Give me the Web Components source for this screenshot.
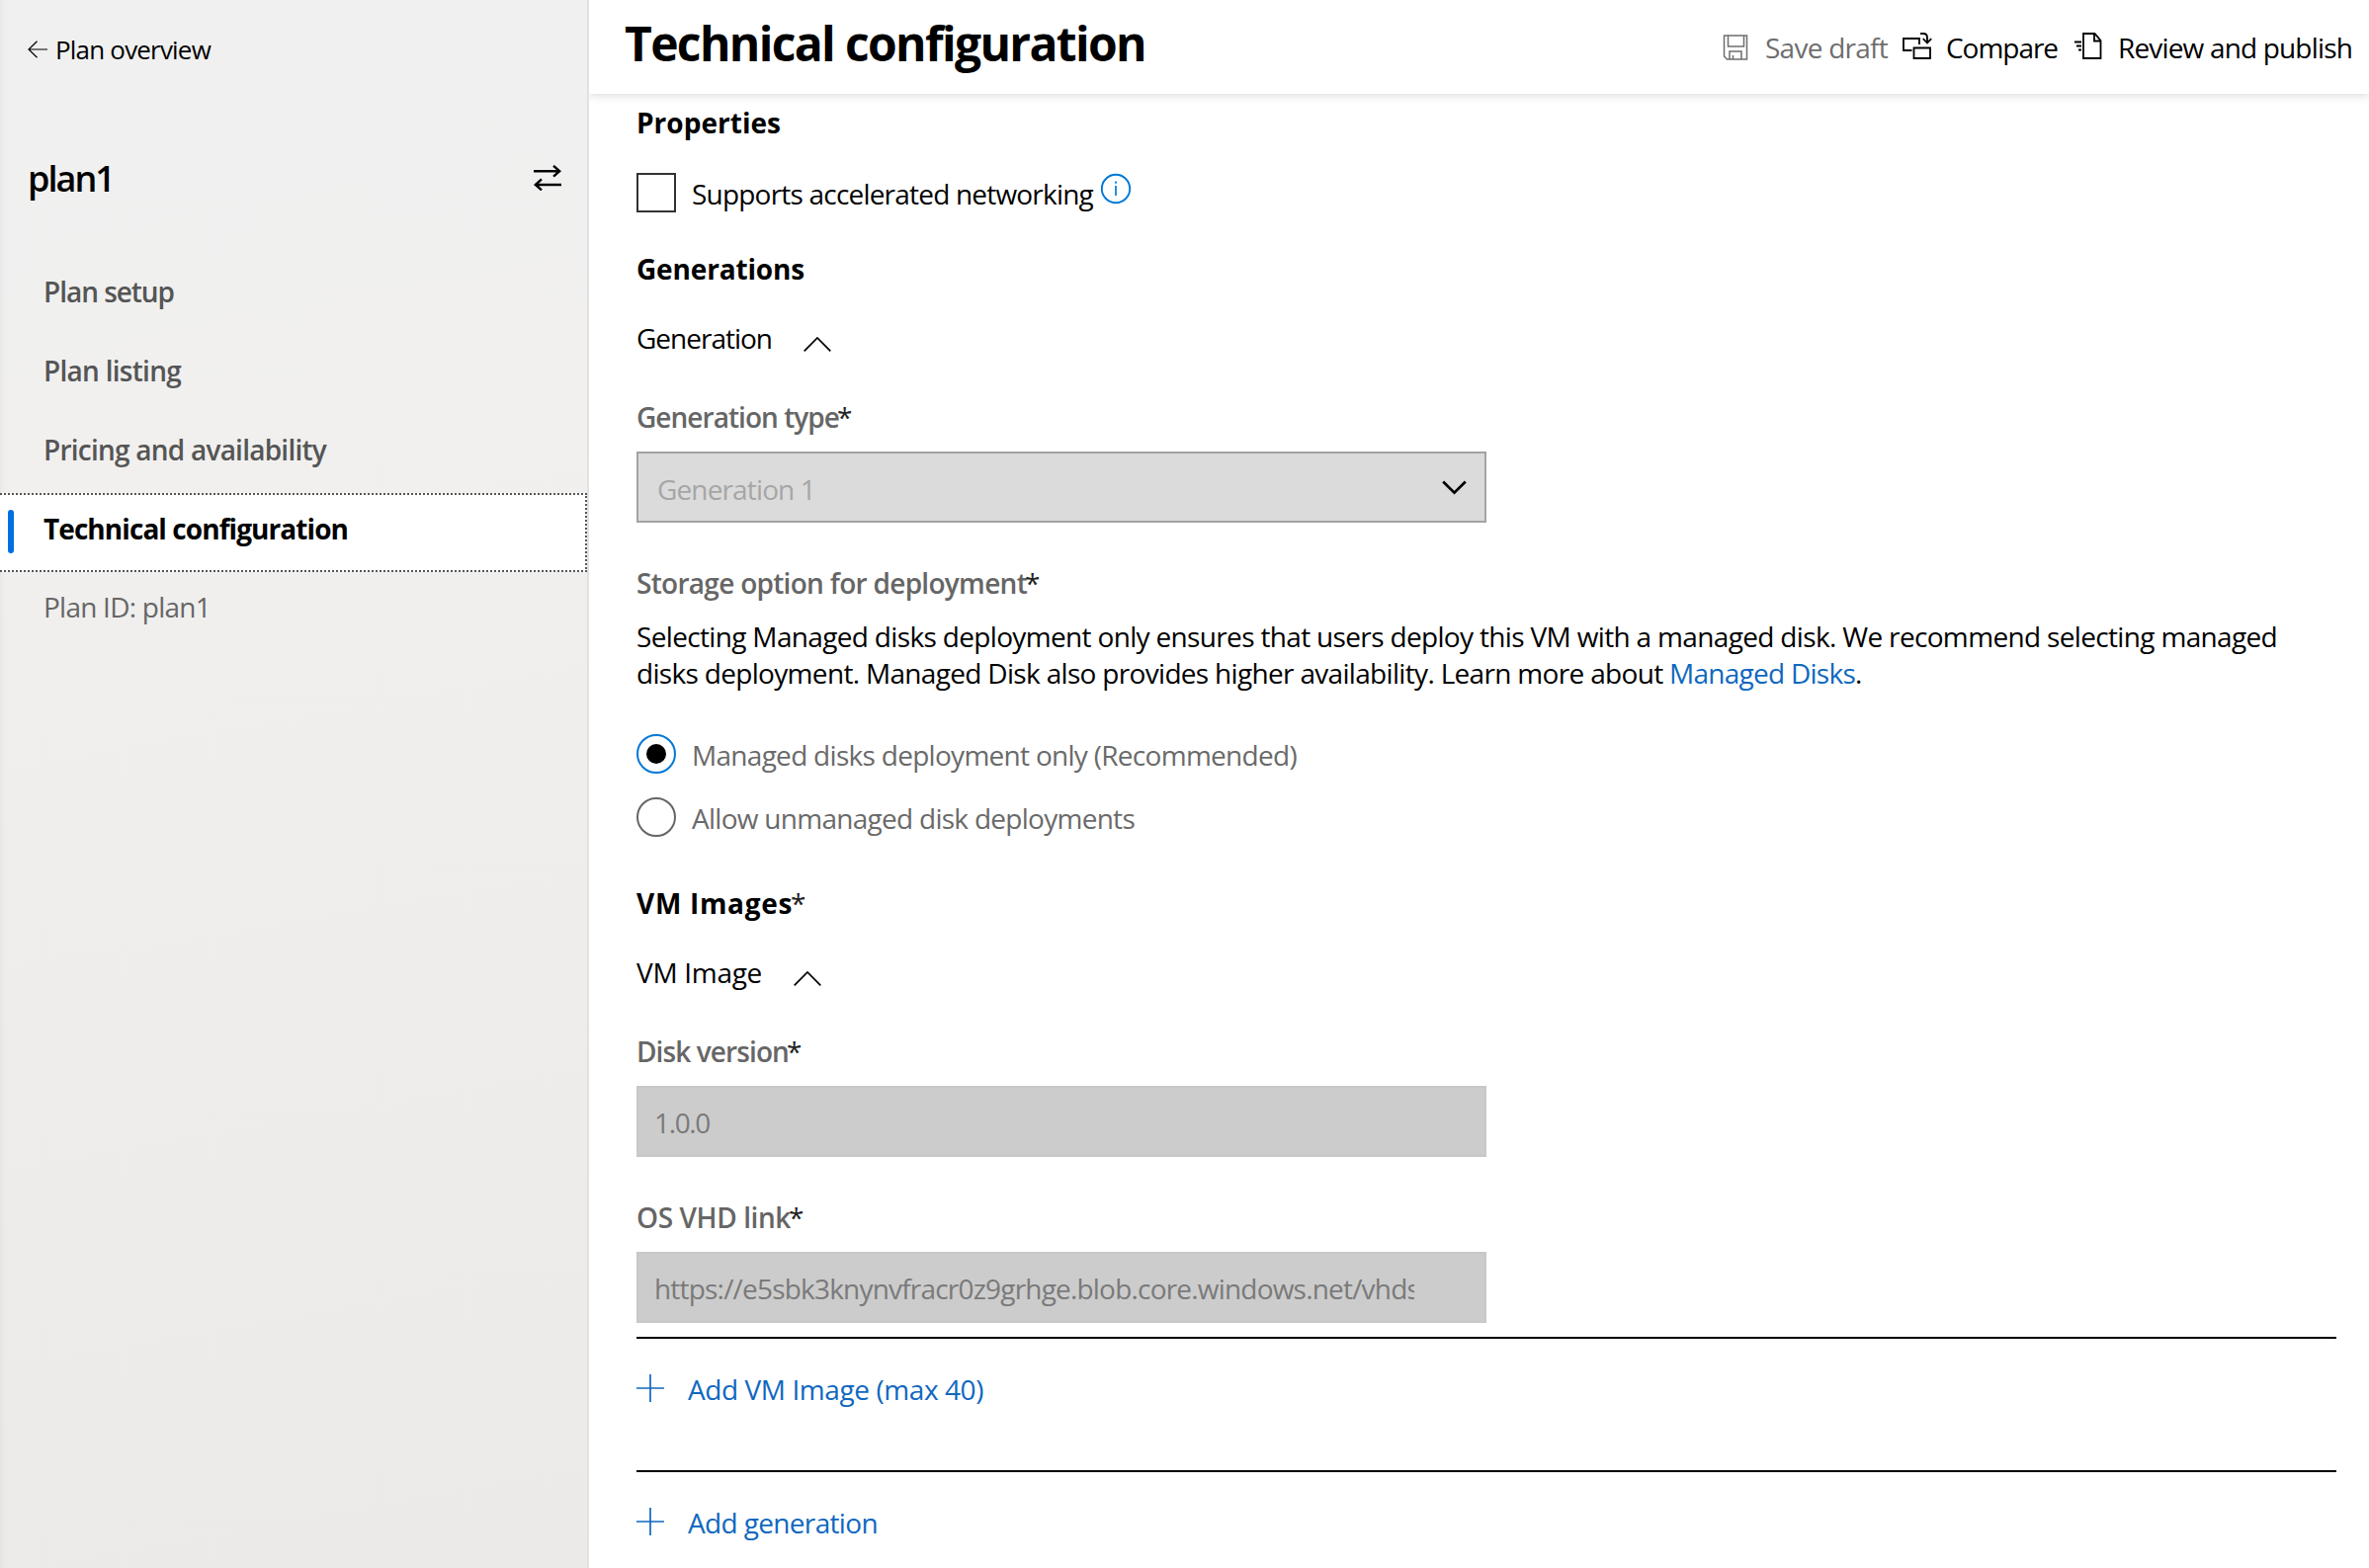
<!DOCTYPE html>
<html lang="en">
<head>
<meta charset="utf-8">
<title>Technical configuration</title>
<style>
html,body{margin:0;height:100%;background:#fff}
body{font-family:"Open Sans","Noto Sans",sans-serif;font-size:28px;line-height:40px;color:#000;overflow:hidden}
</style>
</head>
<body>
<plan-app></plan-app>
<script>
const define = (name, css, html) => customElements.define(name, class extends HTMLElement {
  constructor() {
    super();
    this.attachShadow({mode: "open"}).innerHTML = "<style>" + css + "</style>" + html(this);
  }
});
const attr = (el, n, d = "") => el.getAttribute(n) ?? d;

/* A run of text tracked to occupy the width given in "w". */
customElements.define("fit-text", class extends HTMLElement {
  constructor() {
    super();
    this.attachShadow({mode: "open"}).innerHTML = "<style>:host{display:inline-block;white-space:nowrap}</style><span><slot></slot></span>";
  }
  connectedCallback() {
    const w = +attr(this, "w"), n = this.textContent.length;
    const now = this.shadowRoot.querySelector("span").getBoundingClientRect().width;
    if (w && now && n) this.style.letterSpacing = ((w - now) / n).toFixed(3) + "px";
  }
});

const ICONS = {
  back: [20, 18, '<path d="M9.500 .7L1 9l8.500 8.300M1 9h19" stroke-width="1.200"/>'],
  swap: [28, 26, '<path d="M0 6.200h26M20 .8l6.200 5.400L20 11.600M28 20H2M8 14.400L1.800 20 8 25.400" stroke-width="2.400"/>'],
  save: [26, 26, '<path d="M1.500 1h23v24H4.500l-3-3zM5.500 1v11h16V1M7 25v-8h12v8M10.500 25v-4" stroke-width="1.500"/>'],
  compare: [30, 28, '<path d="M9.500 18H1V6h16v6M11.500 15.500H28V26H11.500zM18 1h3q4 0 4 4v5M20.800 6.200L25 10.400l4.200-4.200" stroke-width="1.800"/>'],
  publish: [30, 28, '<path d="M10 1h11.500l6 7v18H10zM21 1v7.500h6.500M1 9.500h7M3 13.500h5M5 17.500h3" stroke-width="1.800"/>'],
  up: [28, 15, '<path d="M.7 14.300L14 1l13.300 13.300" stroke-width="1.700"/>'],
  down: [25, 15, '<path d="M1.200 1.500l11.300 11.200L23.800 1.500" stroke-width="2.700"/>'],
  plus: [28, 28, '<path d="M14 0v28M0 14h28" stroke-width="1.700"/>'],
  info: [32, 32, '<circle cx="16" cy="16" r="14.200" stroke-width="1.900"/><path d="M16 13v10M16 8.500v2.300" stroke-width="1.700"/>']
};
define("ui-icon", ":host{display:block;flex:none}svg{display:block;fill:none;stroke:currentColor}", el => {
  const [w, h, p] = ICONS[attr(el, "name")];
  return `<svg width="${w}" height="${h}" viewBox="0 0 ${w} ${h}">${p}</svg>`;
});

define("nav-item", `
:host{display:flex;align-items:center;height:80px;box-sizing:border-box;padding:0 0 2px 44px;font-weight:600;color:#555}
:host([plain]){font-weight:400;color:#666;margin-top:-4px}
:host([selected]){margin-top:3px;padding:0 0 3px 8px;gap:30px;background:#fff;color:#000;font-weight:700;border:2px dotted #555;border-left:0}
:host([selected]) ::slotted(fit-text){padding-bottom:6px}
i{display:none}:host([selected]) i{display:block;width:6px;height:44px;border-radius:3px;background:#006fe0}`,
() => "<i></i><slot></slot>");

define("plan-sidebar", `
:host{display:block;width:594px;flex:none;border-right:2px solid #e1e1e1;background:linear-gradient(90deg,rgba(0,0,0,.03),transparent 6px),linear-gradient(170deg,#f0f0f0 0,#f1f0ef 28%,#ebeae9 100%)}
.back{display:flex;align-items:center;gap:8px;height:40px;padding:30px 0 0 28px;font-size:26px}
.plan{display:flex;align-items:center;justify-content:space-between;height:50px;padding:86px 26px 0 28px;font-size:36px;font-weight:600}
.plan ui-icon{padding-bottom:3px}
nav{padding-top:50px}`,
() => `<div class="back"><ui-icon name="back"></ui-icon><fit-text w="157">Plan overview</fit-text></div>
<div class="plan"><fit-text w="87">plan1</fit-text><ui-icon name="swap"></ui-icon></div>
<nav><nav-item><fit-text w="132">Plan setup</fit-text></nav-item>
<nav-item><fit-text w="139">Plan listing</fit-text></nav-item>
<nav-item><fit-text w="286">Pricing and availability</fit-text></nav-item>
<nav-item selected><fit-text w="308">Technical configuration</fit-text></nav-item>
<nav-item plain><fit-text w="169">Plan ID: plan1</fit-text></nav-item></nav>`);

define("page-header", `
:host{display:flex;justify-content:space-between;height:95px;box-sizing:border-box;padding:0 17px 0 36px;background:#fff;box-shadow:0 1px 9px rgba(0,0,0,.17);clip-path:inset(0 0 -12px 0)}
h1{margin:0;font-size:48px;font-weight:700;line-height:87px}
.acts{display:flex;align-items:flex-start;padding-top:28px}
.acts>span{display:flex;align-items:flex-start}.off{color:#6e6e6e}ui-icon{padding-top:5px}`,
() => `<h1><fit-text w="527">Technical configuration</fit-text></h1>
<div class="acts"><span class="off"><ui-icon name="save" style="padding-top:7px;margin-right:17px"></ui-icon><fit-text w="124">Save draft</fit-text></span>
<span style="margin-left:15px"><ui-icon name="compare" style="margin-right:14px"></ui-icon><fit-text w="113">Compare</fit-text></span>
<span style="margin-left:16px"><ui-icon name="publish" style="margin-right:15px"></ui-icon><fit-text w="237">Review and publish</fit-text></span></div>`);

define("form-label", ":host{display:flex;font-weight:600;color:#666}b{font-weight:400;color:#222;margin-left:-2px}:host([head]){color:#000;font-weight:700}", el => `<slot></slot>${el.hasAttribute("req") ? "<b>*</b>" : ""}`);
define("section-toggle", ":host{display:flex;align-items:center;gap:32px}ui-icon{padding-top:13px}", () => `<slot></slot><ui-icon name="up"></ui-icon>`);
define("check-box", ":host{display:flex;align-items:center;gap:16px;height:40px}i{width:36px;height:36px;border:2px solid #333}::slotted(fit-text){padding-top:1px}ui-icon{padding-bottom:8px;margin-left:-9px;color:#0078d7}",
() => `<i></i><slot></slot><ui-icon name="info"></ui-icon>`);
define("radio-option", ":host{display:flex;align-items:center;gap:16px;height:40px;color:#6a6a6a}i{width:36px;height:36px;border:2px solid #666;border-radius:50%;display:grid;place-items:center}:host([on]) i{border-color:#0078d7}:host([on]) i::after{content:'';width:20px;height:20px;border-radius:50%;background:#000}::slotted(fit-text){padding-top:1px}",
() => `<i></i><slot></slot>`);
define("select-field", ":host{display:flex;align-items:center;justify-content:space-between;width:860px;height:72px;box-sizing:border-box;border:2px solid #a3a3a3;background:#dbdbdb;color:#a6a6a6;padding:0 18px 0 19px}ui-icon{color:#000}::slotted(fit-text){padding-top:4px}",
() => `<slot></slot><ui-icon name="down"></ui-icon>`);
define("text-field", ":host{display:flex;align-items:center;width:860px;height:72px;box-sizing:border-box;border:2px solid #c8c8c8;background:#ccc;color:#7a7a7a;padding:0 0 0 16px}div{width:769px;height:40px;padding-top:2px;overflow:hidden;white-space:nowrap}",
() => `<div><slot></slot></div>`);
define("add-link", ":host{display:flex;align-items:center;gap:24px;height:40px;color:#1068bf}::slotted(fit-text){padding-top:2px}", () => `<ui-icon name="plus"></ui-icon><slot></slot>`);

define("config-form", `
:host{display:flex;flex-direction:column;padding:9px 33px 0 48px}
p{margin:0;line-height:37px}p a{color:#1068bf}
hr{width:100%;border:0;height:2px;background:#000;margin:0}`,
() => `<form-label head><fit-text w="146">Properties</fit-text></form-label>
<check-box style="margin-top:31px"><fit-text w="406">Supports accelerated networking</fit-text></check-box>
<form-label head style="margin-top:37px"><fit-text w="170">Generations</fit-text></form-label>
<section-toggle style="margin-top:30px"><fit-text w="137">Generation</fit-text></section-toggle>
<form-label req style="margin-top:40px"><fit-text w="205">Generation type</fit-text></form-label>
<select-field style="margin-top:15px"><fit-text w="160">Generation 1</fit-text></select-field>
<form-label req style="margin-top:41px"><fit-text w="395">Storage option for deployment</fit-text></form-label>
<p style="margin-top:16px"><fit-text w="1660">Selecting Managed disks deployment only ensures that users deploy this VM with a managed disk. We recommend selecting managed</fit-text><br><fit-text w="1045">disks deployment. Managed Disk also provides higher availability. Learn more about&nbsp;</fit-text><a><fit-text w="188">Managed Disks</fit-text></a>.</p>
<radio-option on style="margin-top:43px"><fit-text w="612">Managed disks deployment only (Recommended)</fit-text></radio-option>
<radio-option style="margin-top:24px"><fit-text w="448">Allow unmanaged disk deployments</fit-text></radio-option>
<form-label head req style="margin-top:47px"><fit-text w="158">VM Images</fit-text></form-label>
<section-toggle style="margin-top:30px"><fit-text w="127">VM Image</fit-text></section-toggle>
<form-label req style="margin-top:40px"><fit-text w="154">Disk version</fit-text></form-label>
<text-field style="margin-top:15px"><fit-text w="56">1.0.0</fit-text></text-field>
<form-label req style="margin-top:41px"><fit-text w="156">OS VHD link</fit-text></form-label>
<text-field style="margin-top:15px"><fit-text w="774">https://e5sbk3knynvfracr0z9grhge.blob.core.windows.net/vhds</fit-text></text-field>
<hr style="margin-top:14px">
<add-link style="margin-top:30px"><fit-text w="299">Add VM Image (max 40)</fit-text></add-link>
<hr style="margin-top:63px">
<add-link style="margin-top:30px"><fit-text w="192">Add generation</fit-text></add-link>`);

define("plan-app", ":host{display:flex;height:1587px;overflow:hidden}main{flex:1;min-width:0}page-header{position:relative}",
() => `<plan-sidebar></plan-sidebar><main><page-header></page-header><config-form></config-form></main>`);
</script>
</body>
</html>
